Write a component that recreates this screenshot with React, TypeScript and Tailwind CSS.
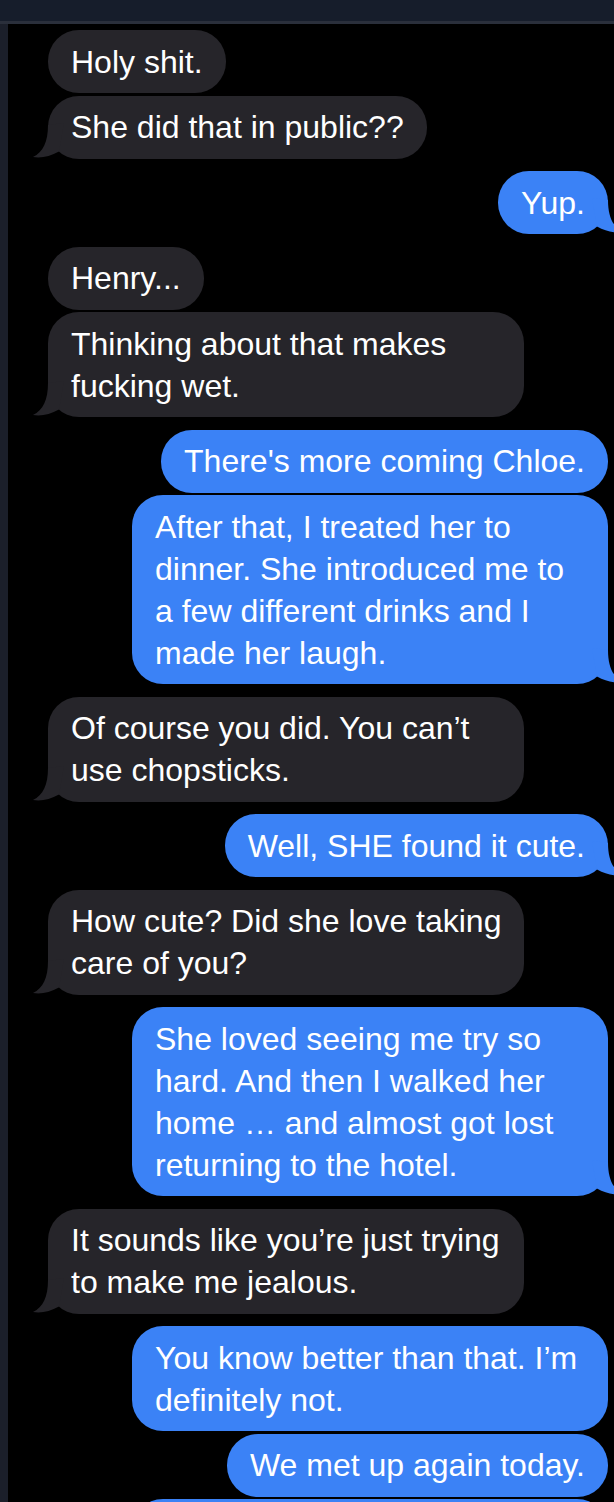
type Sender = "them" | "me";

interface Message {
  id: number;
  from: Sender;
  lines: string[];
  tail?: boolean;
}

const messages: Message[] = [
  { id: 1, from: "them", lines: ["Holy shit."] },
  { id: 2, from: "them", lines: ["She did that in public??"], tail: true },
  { id: 3, from: "me", lines: ["Yup."], tail: true },
  { id: 4, from: "them", lines: ["Henry..."] },
  { id: 5, from: "them", lines: ["Thinking about that makes", "fucking wet."], tail: true },
  { id: 6, from: "me", lines: ["There's more coming Chloe."] },
  {
    id: 7,
    from: "me",
    lines: [
      "After that, I treated her to",
      "dinner. She introduced me to",
      "a few different drinks and I",
      "made her laugh.",
    ],
    tail: true,
  },
  { id: 8, from: "them", lines: ["Of course you did. You can\u2019t", "use chopsticks."], tail: true },
  { id: 9, from: "me", lines: ["Well, SHE found it cute."], tail: true },
  { id: 10, from: "them", lines: ["How cute? Did she love taking", "care of you?"], tail: true },
  {
    id: 11,
    from: "me",
    lines: [
      "She loved seeing me try so",
      "hard. And then I walked her",
      "home \u2026 and almost got lost",
      "returning to the hotel.",
    ],
    tail: true,
  },
  { id: 12, from: "them", lines: ["It sounds like you\u2019re just trying", "to make me jealous."], tail: true },
  { id: 13, from: "me", lines: ["You know better than that. I\u2019m", "definitely not."] },
  { id: 14, from: "me", lines: ["We met up again today."] },
  { id: 15, from: "me", lines: ["\u00a0", "\u00a0"] },
];

const Tail = ({ from }: { from: Sender }) => (
  <svg
    viewBox="0 0 32 36"
    className={`absolute bottom-0 w-[32px] h-[36px] ${
      from === "them" ? "left-[-16px] fill-[#26252a]" : "right-[-16px] -scale-x-100 fill-[#3b82f6]"
    }`}
  >
    <path d="M16 2 C16 19 11 29 1 34 C9 35.5 18 33.5 27 28.5 L32 0 Z" />
  </svg>
);

const Bubble = ({ msg }: { msg: Message }) => {
  const mine = msg.from === "me";
  return (
    <div
      className={`relative max-w-[476px] rounded-[31px] px-[23px] py-[10.5px] text-white ${
        mine ? "self-end bg-[#3b82f6]" : "self-start bg-[#26252a]"
      } ${msg.lines.length > 1 ? "w-[476px]" : ""}`}
    >
      {msg.tail && <Tail from={msg.from} />}
      <p className="relative text-[32px] leading-[42px]">
        {msg.lines.map((line, i) => (
          <span key={i} className="block whitespace-nowrap">
            {line}
          </span>
        ))}
      </p>
    </div>
  );
};

export default function App() {
  return (
    <div className="min-h-screen bg-black overflow-hidden font-['Liberation_Sans',Arial,sans-serif]">
      {/* Top bar */}
      <div className="h-[21px] box-content bg-[#161d2b] border-b-[3px] border-[#2a2f3b]" />

      <div className="flex">
        {/* Left strip */}
        <div className="w-[8px] shrink-0 bg-[#1b1f2a]" />

        {/* Thread */}
        <div className="flex-1 flex flex-col pl-[40px] pr-[6px] pt-[6px] pb-10">
          {messages.map((msg, i) => {
            const prev = messages[i - 1];
            const gap = !prev ? "" : prev.from === msg.from ? "mt-[2.5px]" : "mt-[12.5px]";
            return (
              <div key={msg.id} className={`flex flex-col ${gap}`}>
                <Bubble msg={msg} />
              </div>
            );
          })}
        </div>
      </div>
    </div>
  );
}
